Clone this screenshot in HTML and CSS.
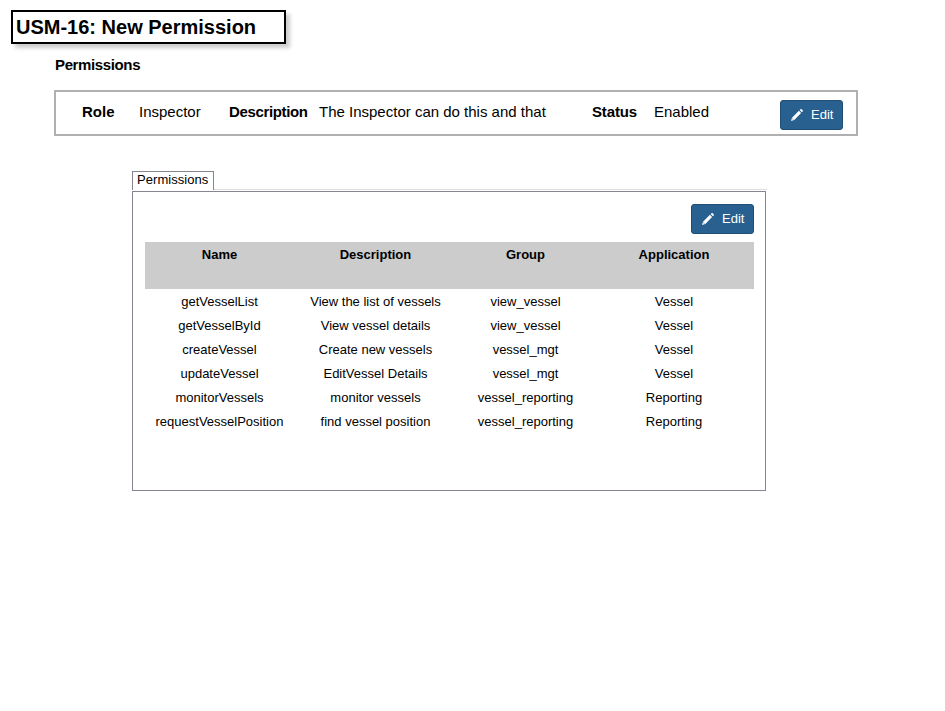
FILE: index.html
```html
<!DOCTYPE html>
<html lang="en">
<head>
<meta charset="utf-8">
<title>USM-16: New Permission</title>
<link rel="stylesheet" href="styles.css">
</head>
<body>
<h1 class="title">USM-16: New Permission</h1>
<h2 class="heading">Permissions</h2>
<section class="role-bar">
  <span class="label role">Role</span><span class="value role-value">Inspector</span>
  <span class="label description">Description</span><span class="value description-value">The Inspector can do this and that</span>
  <span class="label status">Status</span><span class="value">Enabled</span>
  <button class="edit"><svg class="pencil" viewBox="0 0 14 14"><path d="M1 13l1-3.3L8.9 2.8l2.2 2.2L4.3 12zM9.6 2.1l.9-.8q.6-.5 1.2 0l1 1q.5.6 0 1.2l-.9.8z"/><path class="notch" d="M2.3 10.5l1.2 1.2"/></svg>Edit</button>
</section>
<main class="tabs">
  <div class="tab-strip"><div class="tab">Permissions</div><div class="tab-line"></div></div>
  <section class="panel">
    <button class="edit"><svg class="pencil" viewBox="0 0 14 14"><path d="M1 13l1-3.3L8.9 2.8l2.2 2.2L4.3 12zM9.6 2.1l.9-.8q.6-.5 1.2 0l1 1q.5.6 0 1.2l-.9.8z"/><path class="notch" d="M2.3 10.5l1.2 1.2"/></svg>Edit</button>
    <table class="permissions">
      <colgroup><col class="col-name"><col class="col-description"><col class="col-group"><col class="col-application"></colgroup>
      <thead><tr><th>Name</th><th>Description</th><th>Group</th><th>Application</th></tr></thead>
      <tbody>
        <tr><td>getVesselList</td><td>View the list of vessels</td><td>view_vessel</td><td>Vessel</td></tr>
        <tr><td>getVesselById</td><td>View vessel details</td><td>view_vessel</td><td>Vessel</td></tr>
        <tr><td>createVessel</td><td>Create new vessels</td><td>vessel_mgt</td><td>Vessel</td></tr>
        <tr><td>updateVessel</td><td>EditVessel Details</td><td>vessel_mgt</td><td>Vessel</td></tr>
        <tr><td>monitorVessels</td><td>monitor vessels</td><td>vessel_reporting</td><td>Reporting</td></tr>
        <tr><td>requestVesselPosition</td><td>find vessel position</td><td>vessel_reporting</td><td>Reporting</td></tr>
      </tbody>
    </table>
  </section>
</main>
</body>
</html>
```
FILE: styles.css
```css
* { box-sizing: border-box; }
body {
  margin: 0;
  padding: 10px 0 0 11px;
  background: #fff;
  color: #000;
  font: 13px "Liberation Sans", Arial, sans-serif;
}
.title {
  width: 275px;
  height: 34px;
  margin: 0;
  padding-left: 3px;
  border: 2px solid #000;
  box-shadow: 4px 4px 4px rgba(0, 0, 0, .2);
  font-size: 20px;
  line-height: 30px;
}
.heading {
  margin: 11px 0 0 44px;
  font-size: 15px;
  line-height: 20px;
  letter-spacing: -.37px;
}
.role-bar {
  display: flex;
  width: 804px;
  height: 46px;
  margin: 15px 0 0 43px;
  padding: 8px 13px 0 26px;
  border: 2px solid #b0b0b0;
  font-size: 15px;
  line-height: 24px;
  white-space: nowrap;
}
.label { font-weight: bold; letter-spacing: -.3px; }
.role { width: 57px; letter-spacing: 0; }
.role-value { width: 90px; }
.description { width: 90px; letter-spacing: -.35px; }
.description-value { width: 273px; }
.status { width: 62px; letter-spacing: -.15px; }
.edit {
  display: flex;
  align-items: center;
  width: 63px;
  height: 30px;
  margin: 0 0 0 auto;
  padding: 0 0 1px 9px;
  border: 1px solid #204d74;
  border-radius: 3px;
  background: #286090;
  color: #fff;
  font: 13px "Liberation Sans", Arial, sans-serif;
}
.pencil { width: 14px; height: 14px; margin-right: 7px; fill: #fff; }
.notch { fill: none; stroke: #286090; stroke-width: .7; }
.tabs { width: 635px; margin: 35px 0 0 121px; }
.tab-strip { display: flex; align-items: flex-end; height: 20px; }
.tab {
  width: 82px;
  height: 19px;
  margin-bottom: 1px;
  padding-left: 4px;
  border: 1px solid #868690;
  border-bottom: 0;
  line-height: 16px;
  letter-spacing: .05px;
}
.tab-line { flex: 1; height: 1px; margin-bottom: 1px; background: #ddd; }
.panel {
  width: 634px;
  height: 300px;
  padding: 12px 11px 0 12px;
  border: 1px solid #868690;
}
.permissions {
  width: 609px;
  margin-top: 8px;
  border-collapse: collapse;
  table-layout: fixed;
  text-align: center;
}
.col-name { width: 149px; }
.col-description { width: 163px; }
.col-group { width: 137px; }
.col-application { width: 160px; }
.permissions th {
  height: 47px;
  padding: 5px 0 0;
  background: #ccc;
  vertical-align: top;
}
.permissions td { height: 24px; padding: 0; }
```
